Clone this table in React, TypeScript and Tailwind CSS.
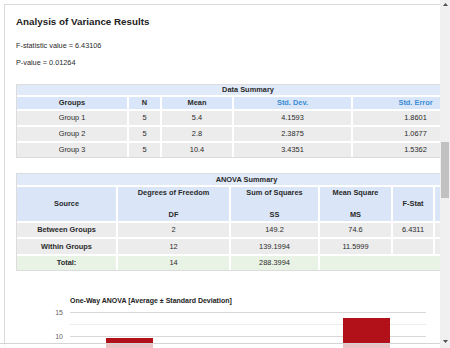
import React from "react";

const dsCols = "grid grid-cols-[110px_31px_70px_117px_125px] gap-x-[2px]";
const avCols = "grid grid-cols-[99px_111px_87px_71px_40px_41px] gap-x-[2px]";

function DataSummary() {
  const rows = [
    ["Group 1", "5", "5.4", "4.1593", "1.8601"],
    ["Group 2", "5", "2.8", "2.3875", "1.0677"],
    ["Group 3", "5", "10.4", "3.4351", "1.5362"],
  ];
  return (
    <div className="mt-[16px] w-[464px] border border-[#dcdcdc] bg-white text-[7.4px]">
      <div className="flex flex-col gap-[2px]">
        <div className="flex h-[10px] items-center justify-center bg-[#e0eaf9] font-bold leading-[10px] text-[#2a2a2a]">
          Data Summary
        </div>
        <div className={`${dsCols} h-[12px] font-bold leading-[12px]`}>
          <div className="bg-[#d9e5f8] text-center text-[#2a2a2a]">Groups</div>
          <div className="bg-[#d9e5f8] text-center text-[#2a2a2a]">N</div>
          <div className="bg-[#d9e5f8] text-center text-[#2a2a2a]">Mean</div>
          <div className="bg-[#d9e5f8] text-center text-[#3a8dd6]">Std. Dev.</div>
          <div className="bg-[#d9e5f8] text-center text-[#3a8dd6]">Std. Error</div>
        </div>
        {rows.map((r) => (
          <div key={r[0]} className={`${dsCols} h-[14px] leading-[14px] text-[#2a2a2a]`}>
            {r.map((c, i) => (
              <div key={i} className="bg-[#ececec] text-center">
                {c}
              </div>
            ))}
          </div>
        ))}
      </div>
    </div>
  );
}

function AnovaSummary() {
  const rows = [
    ["Between Groups", "2", "149.2", "74.6", "6.4311", ""],
    ["Within Groups", "12", "139.1994", "11.5999", "", ""],
  ];
  const hd = "bg-[#dae6f8] font-bold text-[#2a2a2a]";
  return (
    <div className="mt-[15px] w-[461px] border border-[#dcdcdc] bg-white text-[7.4px]">
      <div className="flex flex-col gap-[2px]">
        <div className="flex h-[11px] items-center justify-center bg-[#e0eaf9] font-bold leading-[10px] text-[#2a2a2a]">
          ANOVA Summary
        </div>
        <div className={`${avCols} h-[34px] leading-[10px]`}>
          <div className={`${hd} flex items-center justify-center`}>Source</div>
          <div className={`${hd} flex flex-col items-center justify-between py-px`}>
            <span>Degrees of Freedom</span>
            <span>DF</span>
          </div>
          <div className={`${hd} flex flex-col items-center justify-between py-px`}>
            <span>Sum of Squares</span>
            <span>SS</span>
          </div>
          <div className={`${hd} flex flex-col items-center justify-between py-px`}>
            <span>Mean Square</span>
            <span>MS</span>
          </div>
          <div className={`${hd} flex items-center justify-center`}>F-Stat</div>
          <div className={hd}></div>
        </div>
        {rows.map((r, ri) => (
          <div
            key={r[0]}
            className={`${avCols} ${ri === 0 ? "h-[14px] leading-[14px]" : "h-[15px] leading-[15px]"} text-[#2a2a2a]`}
          >
            {r.map((c, i) => (
              <div key={i} className={`bg-[#ececec] text-center ${i === 0 ? "font-bold" : ""}`}>
                {c}
              </div>
            ))}
          </div>
        ))}
        <div className="grid h-[14px] grid-cols-[99px_111px_87px_156px] gap-x-[2px] leading-[14px] text-[#2a2a2a]">
          <div className="bg-[#e8f3e5] text-center font-bold">Total:</div>
          <div className="bg-[#e8f3e5] text-center">14</div>
          <div className="bg-[#e8f3e5] text-center">288.3994</div>
          <div className="bg-[#e8f3e5]"></div>
        </div>
      </div>
    </div>
  );
}

function Chart() {
  return (
    <div className="mt-[25px]">
      <div className="ml-[54px] text-[7px] font-bold leading-[10px] text-[#222]">
        One-Way ANOVA [Average ± Standard Deviation]
      </div>
      <svg width="420" height="50" className="block" style={{ fontFamily: "'Liberation Sans', Arial, sans-serif" }}>
        <line x1="54" x2="410" y1="6.5" y2="6.5" stroke="#d8d8d8" strokeWidth="1" />
        <line x1="54" x2="410" y1="18.5" y2="18.5" stroke="#ececec" strokeWidth="1" />
        <line x1="54" x2="410" y1="30.5" y2="30.5" stroke="#d8d8d8" strokeWidth="1" />
        <line x1="54" x2="410" y1="42.5" y2="42.5" stroke="#ececec" strokeWidth="1" />
        <text x="47" y="8.5" textAnchor="end" fontSize="7" fill="#666">15</text>
        <text x="47" y="32.5" textAnchor="end" fontSize="7" fill="#666">10</text>
        <rect x="90" y="32" width="47" height="30" fill="#b3111a" />
        <rect x="327" y="12" width="47" height="50" fill="#b3111a" />
      </svg>
    </div>
  );
}

export default function App() {
  return (
    <div className="relative flex h-[348px] w-[450px] overflow-hidden bg-white font-['Liberation_Sans',Arial,sans-serif] text-[#2a2a2a]">
      <div className="h-full w-[440px] shrink-0 overflow-hidden pl-1 pt-1">
        <div className="h-[600px] w-[520px] border-l border-t border-[#d9d9d9] pl-[11px]">
          <h1 className="mt-[11px] text-[9.8px] font-bold leading-[12px] text-[#222]">
            Analysis of Variance Results
          </h1>
          <p className="mt-[13px] text-[7.3px] leading-[10px]">F-statistic value = 6.43106</p>
          <p className="mt-[7px] text-[7.3px] leading-[10px]">P-value = 0.01264</p>
          <DataSummary />
          <AnovaSummary />
          <Chart />
        </div>
      </div>
      <div className="flex h-full w-[10px] shrink-0 flex-col bg-[#f0f0f0]">
        <div className="flex h-[10px] items-start justify-center pt-[3px]">
          <svg width="5" height="3" viewBox="0 0 5 3">
            <polygon points="2.5,0 5,3 0,3" fill="#505050" />
          </svg>
        </div>
        <div className="mx-px mt-[132px] h-[56px] bg-[#c1c1c1]"></div>
        <div className="mt-auto flex h-[10px] items-end justify-center pb-[5px]">
          <svg width="5" height="3" viewBox="0 0 5 3">
            <polygon points="0,0 5,0 2.5,3" fill="#505050" />
          </svg>
        </div>
      </div>
      <div className="absolute bottom-0 left-0 h-[5px] w-[440px] border-t border-[#d4d4d4] bg-white/75"></div>
    </div>
  );
}
